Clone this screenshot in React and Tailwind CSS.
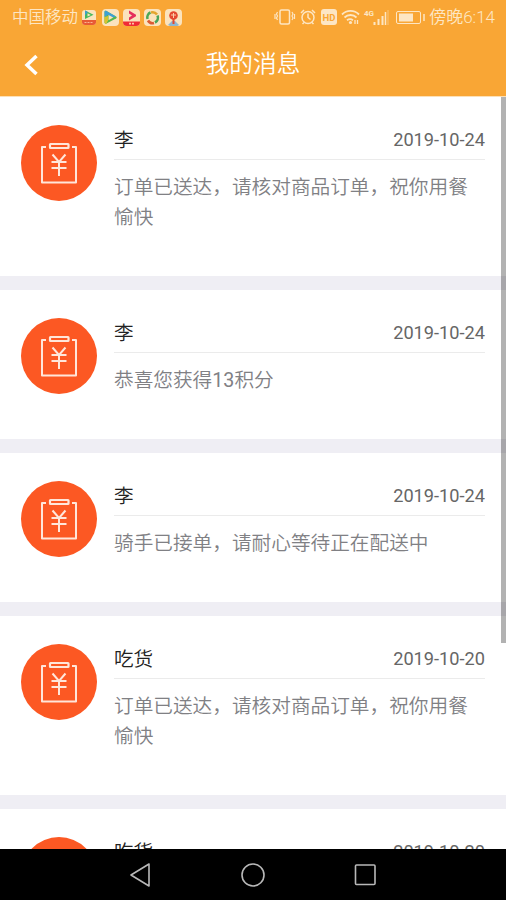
const messages = [
  { name: '李', date: '2019-10-24', text: '订单已送达，请核对商品订单，祝你用餐愉快' },
  { name: '李', date: '2019-10-24', text: '恭喜您获得13积分' },
  { name: '李', date: '2019-10-24', text: '骑手已接单，请耐心等待正在配送中' },
  { name: '吃货', date: '2019-10-20', text: '订单已送达，请核对商品订单，祝你用餐愉快' },
  { name: '吃货', date: '2019-10-20', text: '订单已送达，请核对商品订单，祝你用餐愉快' },
];

function AppBadges() {
  return (
    <svg width="102" height="17" viewBox="0 0 102 17" fill="none">
      {/* Player with red strip */}
      <rect x="1" y="1" width="14" height="15" rx="3" fill="#fbe3bd" />
      <path d="M4 1.500v8.500l8.500-4.200z" fill="#45b95a" />
      <path d="M4 1.500v5l3-3.500z" fill="#3f9ec8" />
      <path d="M6.500 4.200v3.300l3.300-1.600z" fill="#fbe3bd" />
      <path d="M1 11h14v2a3 3 0 0 1-3 3H4a3 3 0 0 1-3-3z" fill="#e85a35" />
      <path d="M3.500 13.500h9" stroke="#fbb594" strokeDasharray="2 1" />
      {/* Player */}
      <rect x="21" y="0" width="17" height="17" rx="4" fill="#fbe3bd" />
      <path d="M23.500 3c0-1 1-1.500 2-1l9.500 5.500c1 .6 1 1.400 0 2l-9.500 5c-1 .5-2 0-2-1z" fill="#57b64a" />
      <path d="M23.500 8V3c0-1 1-1.500 2-1l9.500 5.500-3 1-5-2.500z" fill="#3e9fd4" />
      <path d="M23.500 8l3.500-1v4.500l-1.500 3c-1 .5-2 0-2-1z" fill="#d8c22e" />
      <path d="M27.500 6v5.200l4.800-2.600z" fill="#fbe3bd" />
      {/* Video with red strip */}
      <rect x="42" y="0" width="17" height="17" rx="4" fill="#fbe3bd" />
      <path d="M48 1.500l7 4.200v1.600L48 11.500V8.500l3-2-3-2z" fill="#e52f5c" />
      <path d="M42 12.500h17v.5a4 4 0 0 1-4 4h-9a4 4 0 0 1-4-4z" fill="#f02c35" />
      <path d="M48 14.700h2m1 0h2" stroke="#fbc3a5" strokeWidth="1.800" />
      {/* Colour ring */}
      <rect x="63" y="0" width="17" height="17" rx="4" fill="#fbe3bd" />
      <g strokeWidth="2.600">
        <path d="M66.500 10a5.500 5.500 0 0 1 3-6.500" stroke="#4ba856" />
        <path d="M70 3.500a5.500 5.500 0 0 1 6 2" stroke="#e3a52e" />
        <path d="M76.500 6.500a5.500 5.500 0 0 1-2.500 7" stroke="#48a35a" />
        <path d="M73 14a5.500 5.500 0 0 1-6-2.500" stroke="#dc5a34" />
      </g>
      {/* Map pin */}
      <rect x="84" y="0" width="17" height="17" rx="4" fill="#fbe3bd" />
      <path d="M87 16l4-4h3l4 4a4 4 0 0 1-2 1h-7z" fill="#8eb6cf" />
      <circle cx="92.500" cy="6.500" r="4.300" fill="#e4482f" />
      <path d="M92.500 9v6" stroke="#e4482f" strokeWidth="2" />
      <path d="M90 6h5M92.500 4v5" stroke="#fbd0a8" />
    </svg>
  );
}

function StatusIcons() {
  return (
    <svg width="152" height="22" viewBox="274 6 152 22" fill="none" stroke="#fde6c4" strokeWidth="1.500">
      {/* Vibrate */}
      <rect x="280" y="10" width="9.500" height="14" rx="1.500" />
      <path d="M277.500 12l-1 2 1 2-1 2 1 2M292 12l1 2-1 2 1 2-1 2M275 14v5M294.500 14v5" strokeWidth="1.200" />
      {/* Alarm */}
      <circle cx="308" cy="17.500" r="6" />
      <path d="M308 13.500v4l2.500 2M301 13l3-3M315 13l-3-3M304 22.500l-1.500 1.500M312 22.500l1.500 1.500" />
      {/* HD */}
      <rect x="321" y="9" width="16" height="16" rx="3" fill="#fde6c4" stroke="none" />
      <text x="329" y="20.500" textAnchor="middle" fontSize="9.500" fontWeight="700" fontFamily="Roboto, sans-serif" fill="#f9a635" stroke="none">HD</text>
      {/* Wifi */}
      <path d="M342 14.500a12 12 0 0 1 17 0M344.500 17.500a8.500 8.500 0 0 1 12 0M347 20.200a5 5 0 0 1 6 0" strokeWidth="1.800" />
      <circle cx="350.500" cy="22.500" r="1.600" fill="#fde6c4" stroke="none" />
      <path d="M355 24v-4M357.500 20v4" strokeWidth="1.300" />
      {/* Signal */}
      <text x="364" y="16" fontSize="8" fontWeight="700" fontFamily="Roboto, sans-serif" fill="#fde6c4" stroke="none">4G</text>
      <path d="M374.500 25v-3M378.500 25v-6M382.500 25v-9" strokeWidth="2" />
      <path d="M385.500 25v-13" strokeWidth="1.500" />
      <path d="M388 25V10" strokeWidth="1" opacity="0.500" />
      {/* Battery */}
      <rect x="396.500" y="11.500" width="24" height="12" rx="1.500" strokeWidth="1" />
      <path d="M399 13.500h14v8h-14z" fill="#fde6c4" stroke="none" />
      <path d="M424 14v7" strokeWidth="1.500" />
    </svg>
  );
}

function OrderIcon() {
  return (
    <div className="flex h-[76px] w-[76px] shrink-0 items-center justify-center rounded-full bg-[#fc5823]">
      <svg width="76" height="76" viewBox="0 0 76 76" fill="none" stroke="#ffe6da" strokeWidth="2">
        <path d="M25 22h-4v35.500h34V22h-4" strokeLinejoin="round" />
        <rect x="29" y="19" width="18.500" height="4" rx="0.500" strokeWidth="2.200" />
        <path d="M31.500 29.500l6.500 7.500 6.500-7.500M38 37v14M30.500 37h15M30.500 43h15" strokeWidth="2" />
      </svg>
    </div>
  );
}

function MessageCard({ name, date, text }) {
  return (
    <div className="flex shrink-0 gap-[17px] bg-white pt-7 pr-[21px] pb-[43px] pl-[21px]">
      <OrderIcon />
      <div className="min-w-0 flex-1">
        <div className="flex h-[35px] items-center justify-between border-b border-[#ebebeb] pb-1">
          <span className="pt-0.5 text-[19.600px] text-[#222222]">{name}</span>
          <span className="text-[18.200px] text-[#666666]">{date}</span>
        </div>
        <p className="mt-[13px] text-[19.670px] leading-[30px] text-[#808084]">{text}</p>
      </div>
    </div>
  );
}

export default function App() {
  return (
    <div className="flex h-[900px] w-[506px] flex-col overflow-hidden bg-white font-[Roboto,'Noto_Sans_CJK_SC_DemiLight','Noto_Sans_CJK_SC_Light','Noto_Sans_CJK_SC',sans-serif]">
      {/* Header */}
      <header className="h-[97px] shrink-0 border-b border-[#fce0b8] bg-[#f9a635]">
        <div className="flex h-[34px] items-center pr-[11px] pl-3 text-[16.500px] text-[#fde6c4]">
          <span className="pt-[3px] font-light">中国移动</span>
          <div className="ml-[3px]"><AppBadges /></div>
          <div className="ml-auto flex items-center gap-[3px]">
            <StatusIcons />
            <span className="pt-0.5 text-[17px] font-light whitespace-nowrap">傍晚6:14</span>
          </div>
        </div>
        <div className="grid h-[58px] grid-cols-[1fr_auto_1fr] items-center text-white">
          <svg className="mt-1 ml-6" width="16" height="24" viewBox="0 0 16 24" fill="none" stroke="currentColor" strokeWidth="3.500">
            <path d="M12.500 3L3 12l9.500 9" />
          </svg>
          <h1 className="pt-1 text-[23.700px] font-normal">我的消息</h1>
        </div>
      </header>

      {/* Message list */}
      <main className="relative flex min-h-0 flex-1 flex-col gap-[14px] overflow-hidden bg-[#efeef4]">
        {messages.map((message, i) => (
          <MessageCard key={i} {...message} />
        ))}
        <div className="absolute top-0 right-0 h-[546px] w-[5px] bg-black/30" />
      </main>

      {/* Navigation bar */}
      <nav className="flex h-[51px] shrink-0 items-center justify-center gap-[88px] bg-black text-[#b8b8b8]">
        <svg width="24" height="24" viewBox="0 0 24 24" fill="none" stroke="currentColor" strokeWidth="1.600">
          <path d="M20 1v22L2 12z" strokeLinejoin="round" />
        </svg>
        <svg width="24" height="24" viewBox="0 0 24 24" fill="none" stroke="currentColor" strokeWidth="1.600">
          <circle cx="12" cy="12" r="11" />
        </svg>
        <svg width="24" height="24" viewBox="0 0 24 24" fill="none" stroke="currentColor" strokeWidth="1.600">
          <rect x="2.500" y="2" width="19.500" height="19.500" rx="1" />
        </svg>
      </nav>
    </div>
  );
}
